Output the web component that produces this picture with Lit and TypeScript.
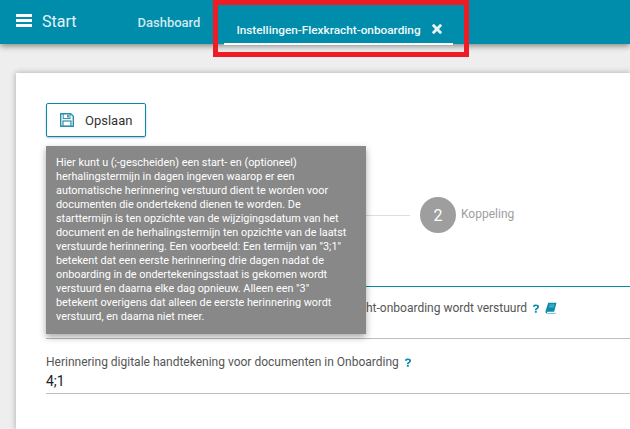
import { LitElement, html, css, svg } from "lit";
import { customElement } from "lit/decorators.js";

const question = svg`<svg class="q" viewBox="0 0 10 12" width="8" height="11"><path d="M1 3.6C1.4 1.7 3 1 4.9 1 7.2 1 8.8 2.1 8.8 3.9c0 1.5-.9 2.1-1.9 2.8-.7.5-1 .8-1 1.5H3.7c0-1.4.5-2 1.5-2.7.8-.5 1.2-.9 1.2-1.5 0-.7-.6-1-1.5-1-.9 0-1.4.4-1.7 1.1zM3.6 9h2.4v2.2H3.6z" fill="#0a8cab"/></svg>`;

@customElement("app-root")
export class AppRoot extends LitElement {
  static styles = css`
    :host { display: block; width: 630px; height: 429px; overflow: hidden; position: relative; background: #eeeeee; font-family: Roboto, sans-serif; }
    .top { display: flex; align-items: center; height: 44px; background: #008cab; box-shadow: 0 2px 6px rgba(0,0,0,.45); color: #fff; position: relative; }
    .burger { display: flex; flex-direction: column; gap: 2px; width: 16px; margin-left: 16px; margin-top: -3px; }
    .burger i { display: block; height: 3px; background: #fff; }
    .start { font-size: 16px; margin-left: 10px; margin-top: -2px; color: #e6f4f7; }
    .dash { font-size: 13px; font-weight: 500; margin-left: 61px; color: #cfe8ee; }
    .tab { display: flex; align-items: center; align-self: flex-end; height: 42px; margin-left: 24px; width: 229px; padding-left: 12px; box-sizing: border-box; border-bottom: 2px solid #fff; margin-bottom: -1px; font-size: 11.8px; font-weight: 500; color: #f2f9fb; }
    .tab span { margin-top: 13px; white-space: nowrap; }
    .tab svg { margin: 12px 0 0 10px; flex: none; }
    .red { position: absolute; left: 213px; top: 0; width: 256px; height: 57px; box-sizing: border-box; border: 5px solid #ee1c25; pointer-events: none; }
    main { padding: 29px 0 0 16px; }
    .card { background: #fff; box-shadow: 0 0 6px rgba(0,0,0,.3); padding: 30px 0 60px 30px; height: 356px; box-sizing: border-box; }
    .save { display: inline-flex; align-items: center; height: 34px; width: 100px; box-sizing: border-box; padding-left: 13px; border: 1px solid #008cab; border-radius: 2px; box-shadow: 0 1px 2px rgba(0,0,0,.25); font-size: 13px; color: #333; gap: 11px; }
    .steps { display: flex; align-items: center; margin-top: 60px; height: 36px; }
    .rule { flex: 0 0 364px; height: 1px; background: #ddd; }
    .num { width: 36px; height: 36px; margin-left: 10px; border-radius: 50%; background: #9e9e9e; color: #fff; font-size: 16px; display: flex; align-items: center; justify-content: center; flex: none; }
    .step { font-size: 12px; color: #9e9e9e; margin-left: 5px; margin-top: -3px; }
    .tabline { height: 1px; background: #008cab; margin-top: 53px; }
    .field { display: flex; flex-direction: column; border-bottom: 1px solid #bdbdbd; }
    .f1 { height: 52px; padding: 13px 0 0 320px; box-sizing: border-box; }
    .f2 { height: 55px; padding-top: 15px; box-sizing: border-box; }
    .label { display: flex; align-items: center; font-size: 12px; color: #555; white-space: nowrap; line-height: 16px; }
    .label svg { margin-left: 5px; flex: none; }
    .value { font-size: 14px; color: #222; line-height: 18px; margin-top: 2px; }
    .tip { position: absolute; left: 46px; top: 146px; width: 320px; height: 188px; box-sizing: border-box; padding: 10px 0 0 10px; background: #888888; color: #fff; font: 10.85px/14px Roboto, sans-serif; box-shadow: 0 3px 7px rgba(0,0,0,.35); white-space: pre-line; }
  `;

  render() {
    return html`
      <header class="top">
        <div class="burger"><i></i><i></i><i></i></div>
        <div class="start">Start</div>
        <div class="dash">Dashboard</div>
        <div class="tab">
          <span>Instellingen-Flexkracht-onboarding</span>
          <svg viewBox="0 0 12 12" width="12" height="12"><path d="M2.8 .8 6 4 9.2 .8 11.2 2.8 8 6l3.2 3.2-2 2L6 8l-3.2 3.2-2-2L4 6 .8 2.8z" fill="#e8f3f6"/></svg>
        </div>
      </header>
      <main>
        <section class="card">
          <div class="save">
            <svg viewBox="0 0 14 14" width="14" height="14"><path d="M.7.7h10l2.6 2.6v10H.7z" fill="#fff" stroke="#2a90aa" stroke-width="1.4"/><rect x="3.2" y="1" width="6.8" height="4.6" fill="#fff" stroke="#2a90aa"/><rect x="7.2" y="1.8" width="1.6" height="2.8" fill="#2a90aa"/><rect x="3" y="8" width="8" height="5" fill="#fff" stroke="#2a90aa" stroke-width="1.2"/></svg>
            Opslaan
          </div>
          <div class="steps">
            <div class="rule"></div>
            <div class="num">2</div>
            <div class="step">Koppeling</div>
          </div>
          <div class="tabline"></div>
          <div class="field f1">
            <div class="label">ht-onboarding wordt verstuurd ${question}
              <svg viewBox="0 0 12 12" width="12" height="12"><path d="M3.2 .8h8.3L9.2 9.8H2.6c-.9 0-.9 1.1-.1 1.1h7.7l.5-.6-.2 1.2H2.2C.6 11.5.2 10.2.6 9z" fill="#0a8cab"/><path d="M4.4 3h5M3.9 4.8h5" stroke="#9bd0dd" stroke-width=".7"/></svg>
            </div>
          </div>
          <div class="field f2">
            <div class="label">Herinnering digitale handtekening voor documenten in Onboarding ${question}</div>
            <div class="value">4;1</div>
          </div>
        </section>
      </main>
      <div class="red"></div>
      <div class="tip">Hier kunt u (;-gescheiden) een start- en (optioneel)
herhalingstermijn in dagen ingeven waarop er een
automatische herinnering verstuurd dient te worden voor
documenten die ondertekend dienen te worden. De
starttermijn is ten opzichte van de wijzigingsdatum van het
document en de herhalingstermijn ten opzichte van de laatst
verstuurde herinnering. Een voorbeeld: Een termijn van "3;1"
betekent dat een eerste herinnering drie dagen nadat de
onboarding in de ondertekeningsstaat is gekomen wordt
verstuurd en daarna elke dag opnieuw. Alleen een "3"
betekent overigens dat alleen de eerste herinnering wordt
verstuurd, en daarna niet meer.</div>
    `;
  }
}
